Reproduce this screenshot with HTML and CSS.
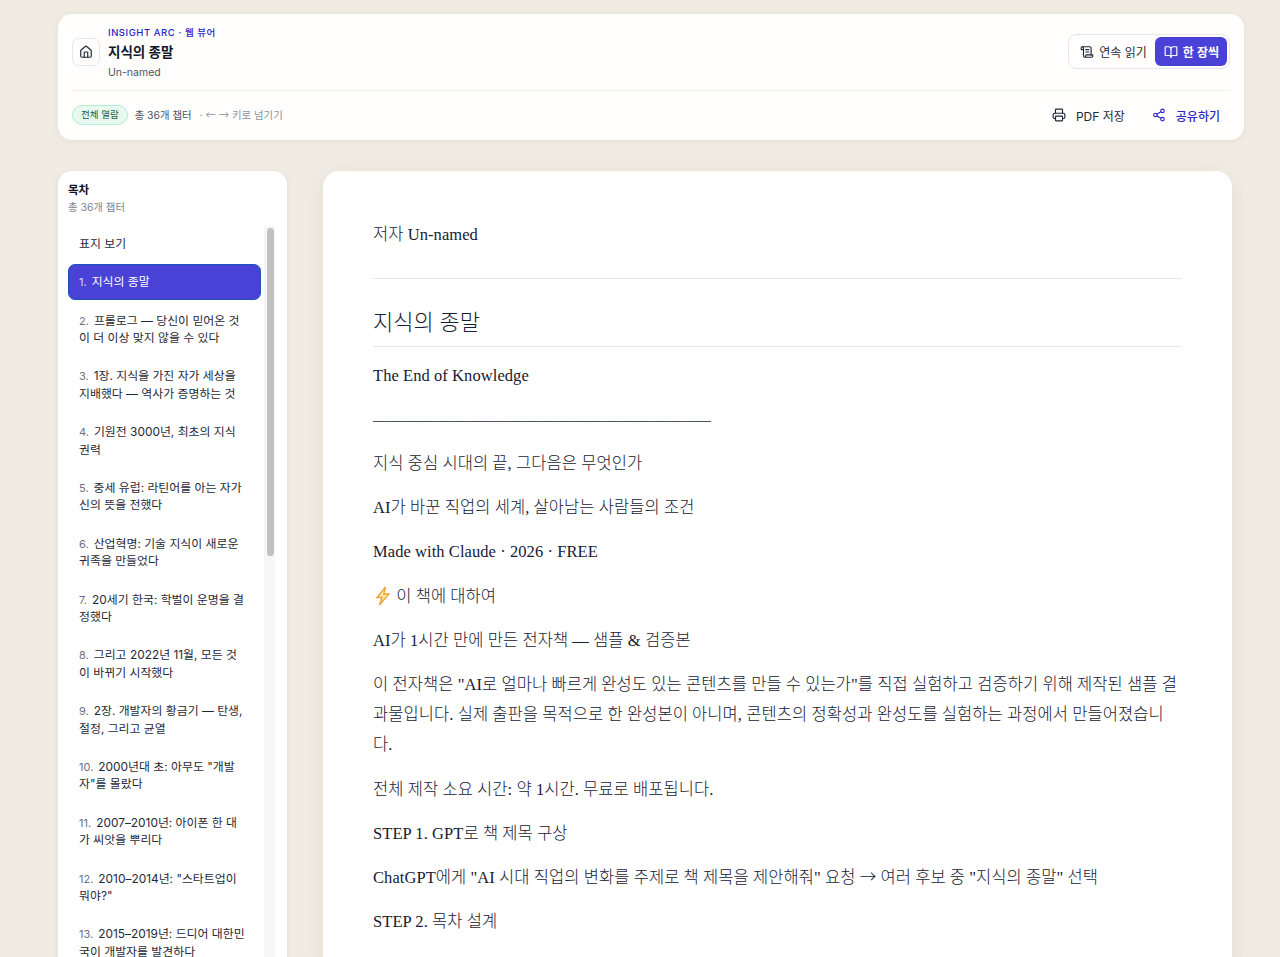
FILE: index.html
```html
<!DOCTYPE html>
<html lang="ko">
<head>
<meta charset="utf-8">
<title>지식의 종말</title>
<link rel="stylesheet" href="styles.css">
</head>
<body>
<div class="page">

<header class="topbar">
	<div class="top-row">
		<div class="brand">
			<a class="home-btn">
				<svg class="icon" viewBox="0 0 24 24"><path d="M15 21v-8a1 1 0 0 0-1-1h-4a1 1 0 0 0-1 1v8"/><path d="M3 10a2 2 0 0 1 .709-1.528l7-5.999a2 2 0 0 1 2.582 0l7 5.999A2 2 0 0 1 21 10v9a2 2 0 0 1-2 2H5a2 2 0 0 1-2-2z"/></svg>
			</a>
			<div class="brand-text">
				<div class="eyebrow">INSIGHT ARC · 웹 뷰어</div>
				<div class="book-title">지식의 종말</div>
				<div class="book-author">Un-named</div>
			</div>
		</div>
		<div class="mode-switch">
			<button class="mode-btn">
				<svg class="icon" viewBox="0 0 24 24"><path d="M15 12h-5"/><path d="M15 8h-5"/><path d="M19 17V5a2 2 0 0 0-2-2H4"/><path d="M8 21h12a2 2 0 0 0 2-2v-1a1 1 0 0 0-1-1H11a1 1 0 0 0-1 1v1a2 2 0 1 1-4 0V5a2 2 0 1 0-4 0v2a1 1 0 0 0 1 1h3"/></svg>
				연속 읽기
			</button>
			<button class="mode-btn on">
				<svg class="icon" viewBox="0 0 24 24"><path d="M12 7v14"/><path d="M3 18a1 1 0 0 1-1-1V4a1 1 0 0 1 1-1h5a4 4 0 0 1 4 4 4 4 0 0 1 4-4h5a1 1 0 0 1 1 1v13a1 1 0 0 1-1 1h-6a3 3 0 0 0-3 3 3 3 0 0 0-3-3z"/></svg>
				한 장씩
			</button>
		</div>
	</div>
	<div class="bottom-row">
		<div class="meta">
			<span class="badge">전체 열람</span>
			<span class="count">총 36개 챕터</span>
			<span class="hint">· ← → 키로 넘기기</span>
		</div>
		<div class="actions">
			<a class="action">
				<svg class="icon" viewBox="0 0 24 24"><path d="M6 18H4a2 2 0 0 1-2-2v-5a2 2 0 0 1 2-2h16a2 2 0 0 1 2 2v5a2 2 0 0 1-2 2h-2"/><path d="M6 9V3a1 1 0 0 1 1-1h10a1 1 0 0 1 1 1v6"/><rect x="6" y="14" width="12" height="8" rx="1"/></svg>
				PDF 저장
			</a>
			<a class="action share">
				<svg class="icon" viewBox="0 0 24 24"><circle cx="18" cy="5" r="3"/><circle cx="6" cy="12" r="3"/><circle cx="18" cy="19" r="3"/><line x1="8.59" y1="13.51" x2="15.42" y2="17.49"/><line x1="15.41" y1="6.51" x2="8.59" y2="10.49"/></svg>
				공유하기
			</a>
		</div>
	</div>
</header>

<div class="columns">
	<aside class="toc">
		<div class="toc-title">목차</div>
		<div class="toc-sub">총 36개 챕터</div>
		<div class="toc-body">
			<ul class="toc-list">
				<li class="toc-item">표지 보기</li>
				<li class="toc-item on"><span class="num">1.</span>지식의 종말</li>
				<li class="toc-item"><span class="num">2.</span>프롤로그 — 당신이 믿어온 것이 더 이상 맞지 않을 수 있다</li>
				<li class="toc-item"><span class="num">3.</span>1장. 지식을 가진 자가 세상을 지배했다 — 역사가 증명하는 것</li>
				<li class="toc-item"><span class="num">4.</span>기원전 3000년, 최초의 지식 권력</li>
				<li class="toc-item"><span class="num">5.</span>중세 유럽: 라틴어를 아는 자가 신의 뜻을 전했다</li>
				<li class="toc-item"><span class="num">6.</span>산업혁명: 기술 지식이 새로운 귀족을 만들었다</li>
				<li class="toc-item"><span class="num">7.</span>20세기 한국: 학벌이 운명을 결정했다</li>
				<li class="toc-item"><span class="num">8.</span>그리고 2022년 11월, 모든 것이 바뀌기 시작했다</li>
				<li class="toc-item"><span class="num">9.</span>2장. 개발자의 황금기 — 탄생, 절정, 그리고 균열</li>
				<li class="toc-item"><span class="num">10.</span>2000년대 초: 아무도 "개발자"를 몰랐다</li>
				<li class="toc-item"><span class="num">11.</span>2007–2010년: 아이폰 한 대가 씨앗을 뿌리다</li>
				<li class="toc-item"><span class="num">12.</span>2010–2014년: "스타트업이 뭐야?"</li>
				<li class="toc-item"><span class="num">13.</span>2015–2019년: 드디어 대한민국이 개발자를 발견하다</li>
			</ul>
			<div class="scroll-track"><div class="scroll-thumb"></div></div>
		</div>
	</aside>

	<main class="reader">
		<p class="byline">저자 Un-named</p>
		<hr class="rule">
		<h2 class="chapter">지식의 종말</h2>
		<p class="title-en">The End of Knowledge</p>
		<p class="sep">——————————————————————</p>
		<p>지식 중심 시대의 끝, 그다음은 무엇인가</p>
		<p>AI가 바꾼 직업의 세계, 살아남는 사람들의 조건</p>
		<p>Made with Claude · 2026 · FREE</p>
		<p><svg class="bolt" viewBox="0 0 16 20"><path d="M10.5 1 2 11.5h5L4.5 19 14 8H8.8z"/></svg> 이 책에 대하여</p>
		<p>AI가 1시간 만에 만든 전자책 — 샘플 &amp; 검증본</p>
		<p>이 전자책은 "AI로 얼마나 빠르게 완성도 있는 콘텐츠를 만들 수 있는가"를 직접 실험하고 검증하기 위해 제작된 샘플 결과물입니다. 실제 출판을 목적으로 한 완성본이 아니며, 콘텐츠의 정확성과 완성도를 실험하는 과정에서 만들어졌습니다.</p>
		<p>전체 제작 소요 시간: 약 1시간. 무료로 배포됩니다.</p>
		<p>STEP 1. GPT로 책 제목 구상</p>
		<p>ChatGPT에게 "AI 시대 직업의 변화를 주제로 책 제목을 제안해줘" 요청 <span class="arrow">→</span> 여러 후보 중 "지식의 종말" 선택</p>
		<p>STEP 2. 목차 설계</p>
	</main>
</div>

</div>
</body>
</html>
```

FILE: styles.css
```css
html, body {
	margin: 0;
	height: 100%;
	overflow: hidden;
}
body {
	background-color: #f1ece3;
	font-family: Inter, "Noto Sans CJK KR", sans-serif;
	color: #111827;
}
.page {
	height: 957px;
	overflow: hidden;
	padding: 14px 36px 0 58px;
	box-sizing: border-box;
}
.icon {
	width: 14px;
	height: 14px;
	fill: none;
	stroke: currentColor;
	stroke-width: 2;
	stroke-linecap: round;
	stroke-linejoin: round;
	flex: none;
}

/* top bar */
.topbar {
	background: #fffefc;
	border-radius: 14px;
	box-shadow: 0 1px 6px rgba(60, 50, 30, 0.08);
	padding: 10px 14px 0 14px;
	height: 126px;
	box-sizing: border-box;
}
.top-row {
	display: flex;
	justify-content: space-between;
	align-items: center;
	height: 56px;
	padding-bottom: 10px;
	border-bottom: 1px solid #f0f1f5;
}
.brand {
	display: flex;
	align-items: center;
	gap: 8px;
}
.brand-text {
	margin-top: 1px;
}
.home-btn {
	width: 28px;
	height: 28px;
	box-sizing: border-box;
	display: flex;
	align-items: center;
	justify-content: center;
	border: 1px solid #e5e7f0;
	border-radius: 7px;
	color: #1f2937;
}
.eyebrow {
	font-size: 9.5px;
	font-weight: 500;
	letter-spacing: 0.55px;
	line-height: 14px;
	color: #2525c8;
}
.book-title {
	font-size: 13.5px;
	font-weight: 700;
	line-height: 25px;
}
.book-author {
	font-size: 10.5px;
	line-height: 15px;
	color: #4b5563;
}
.mode-switch {
	display: flex;
	padding: 2px;
	margin-top: -1px;
	border: 1px solid #e5e7f0;
	border-radius: 8px;
}
.mode-btn {
	display: flex;
	align-items: center;
	gap: 5px;
	border: 0;
	background: none;
	height: 29px;
	padding: 0 8px 0 9px;
	font-family: inherit;
	font-size: 12px;
	font-weight: 400;
	color: #1f2937;
	border-radius: 6px;
}
.mode-btn.on {
	background: #4a42d6;
	color: #fff;
	font-weight: 600;
}
.bottom-row {
	display: flex;
	justify-content: space-between;
	align-items: center;
	height: 48px;
}
.meta {
	display: flex;
	align-items: center;
	font-size: 10.4px;
	color: #4b5563;
}
.badge {
	background: #e7f9f0;
	border: 1px solid #b4ecd2;
	color: #166044;
	font-size: 9.5px;
	border-radius: 10px;
	padding: 2px 8px;
	line-height: 14px;
	margin-right: 7px;
}
.count {
	margin-bottom: 1px;
}
.hint {
	margin: 0 0 1px 8px;
	color: #8a91a0;
	font-family: "Noto Sans CJK KR", sans-serif;
}
.actions {
	display: flex;
	gap: 27px;
	padding-right: 10px;
}
.action {
	display: flex;
	align-items: center;
	gap: 10px;
	font-size: 12px;
	font-weight: 400;
	color: #1f2937;
}
.action.share {
	color: #2f27c4;
	font-weight: 500;
}

/* columns */
.columns {
	display: flex;
	align-items: flex-start;
	gap: 36px;
	margin-top: 31px;
	padding-right: 12px;
}
.toc {
	width: 229px;
	flex: none;
	height: 800px;
	box-sizing: border-box;
	background: #fff;
	border-radius: 14px;
	box-shadow: 0 1px 6px rgba(60, 50, 30, 0.08);
	padding: 11px 11px 0 10px;
}
.toc-title {
	font-size: 11.5px;
	font-weight: 600;
	line-height: 16px;
}
.toc-sub {
	font-size: 10.4px;
	line-height: 18px;
	margin-top: 0.5px;
	color: #7b8494;
	margin-bottom: 9.2px;
}
.toc-body {
	display: flex;
	gap: 3px;
}
.toc-list {
	list-style: none;
	margin: 0;
	padding: 0;
	width: 193px;
	flex: none;
	display: flex;
	flex-direction: column;
	gap: 3px;
}
.toc-item {
	font-size: 11.9px;
	line-height: 17.4px;
	padding: 8px 14px 8px 10px;
	border: 1px solid transparent;
	border-radius: 7px;
	color: #1f2937;
}
.toc-item.on {
	background: #4a42d6;
	border-color: #1a56b8;
	color: #fff;
}
.num {
	font-size: 11px;
	line-height: 1;
	color: #6b7280;
	margin-right: 5px;
}
.on .num {
	color: #dcdcff;
}
.scroll-track {
	width: 11px;
	height: 740px;
	background: #f6f6f6;
	flex: none;
	padding-top: 2px;
}
.scroll-thumb {
	width: 7px;
	height: 328px;
	margin-left: 3px;
	border-radius: 4px;
	background: #c1c1c1;
}

/* reader */
.reader {
	flex: 1;
	height: 800px;
	box-sizing: border-box;
	background: #fff;
	border-radius: 16px;
	box-shadow: 0 4px 20px rgba(60, 50, 30, 0.08);
	padding: 49px 50px 0;
	font-family: "Liberation Serif", "Noto Sans CJK KR", serif;
	font-size: 16.5px;
	font-weight: 300;
	letter-spacing: 0.07px;
	line-height: 30px;
	color: #172033;
}
.reader p {
	margin: 0 0 14.3px;
}
.reader .byline {
	margin-bottom: 28px;
}
.reader .title-en {
	margin-bottom: 13.5px;
}
.reader .sep {
	font-size: 15.36px;
	font-weight: 700;
	letter-spacing: 0;
	color: #4b5563;
}
.rule {
	border: 0;
	border-top: 1px solid #e5e7eb;
	margin: 0 0 24px;
}
.chapter {
	font-size: 22px;
	font-weight: 300;
	line-height: 38px;
	margin: 0 0 14px;
	padding: 1px 0 4px;
	border-bottom: 1px solid #e5e7eb;
}
.arrow {
	font-family: "Noto Sans CJK KR", sans-serif;
	line-height: 1;
}
.bolt {
	width: 16px;
	height: 20px;
	margin: 0 1px 0 2px;
	vertical-align: -4px;
	fill: #ffe9a8;
	stroke: #f0a030;
	stroke-width: 1.3;
}
```
